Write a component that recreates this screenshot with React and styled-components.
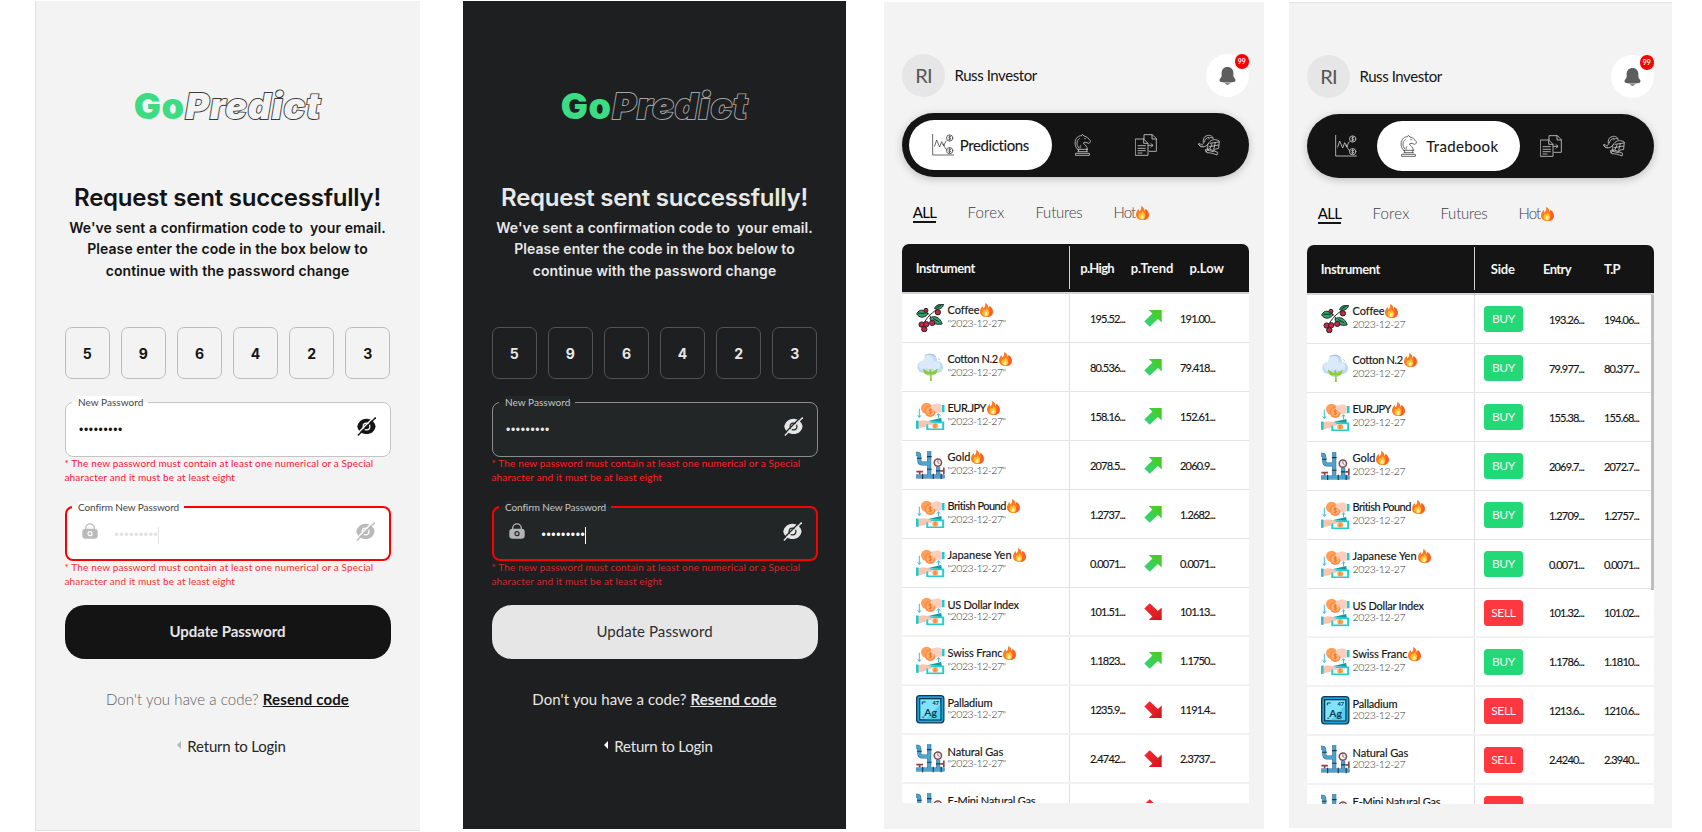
import React from "react";
import styled, { createGlobalStyle, ThemeProvider, css } from "styled-components";

const GlobalStyle = createGlobalStyle`
  *, *::before, *::after { box-sizing: border-box; }
  body { margin: 0; background: #fff; }
`;

const light = {
  bg: "#f3f3f3", edge: "1px solid #e0e0e0", text: "#141414", outline: "#3a3a3a",
  otp: "#bdbdbd", field: "#fff", fieldBorder: "#c4c4c4", label: "#444",
  eye: "#141414", eye2: "#bababa", lock: "#bababa", dots2: "#e2e2e2",
  error: "#ff1430", error2: "#fb2f2f", button: "#141414", buttonText: "#e6e6e6", buttonWeight: 700,
  muted: "#606060", mutedWeight: 300, link: "#141414", arrow: "#b8b8b8", returnText: "#262626",
};

const dark = {
  bg: "#1e1f21", edge: "none", text: "#e8e8e8", outline: "#a5a5a5",
  otp: "#515254", field: "#232627", fieldBorder: "#8b8d8d", label: "#c6c6c6",
  eye: "#e6e6e6", eye2: "#e6e6e6", lock: "#b4b4b4", dots2: "#fff",
  error: "#ff2020", error2: "#d12a2c", button: "#e6e6e6", buttonText: "#2c2d2e", buttonWeight: 400,
  muted: "#e6e6e6", mutedWeight: 400, link: "#e6e6e6", arrow: "#fff", returnText: "#e6e6e6",
};

const Board = styled.main`
  display: flex;
  align-items: flex-start;
  width: 1702px;
  height: 832px;
  overflow: hidden;
  padding-left: 35px;
  font-family: Lato, "Liberation Sans", sans-serif;
`;

/* ---------- password screens ---------- */

const AuthScreen = styled.section`
  display: flex;
  flex-direction: column;
  width: ${(p) => p.$w}px;
  height: ${(p) => p.$h}px;
  margin: 1px ${(p) => p.$gap}px 0 0;
  padding: 83px ${(p) => p.$right}px 0 28.5px;
  background: ${(p) => p.theme.bg};
  border-left: ${(p) => p.theme.edge};
  border-bottom: ${(p) => p.theme.edge};
  color: ${(p) => p.theme.text};
`;

const Logo = styled.div`
  font: 900 36px/44px Inter, sans-serif;
  letter-spacing: 0.5px;
  text-align: center;
  white-space: nowrap;
  color: #3ddc84;
`;

const LogoOutline = styled.span`
  font-style: italic;
  letter-spacing: 0.85px;
  margin-left: 1px;
  color: ${(p) => p.theme.bg};
  -webkit-text-stroke: 1.9px ${(p) => p.theme.outline};
  paint-order: stroke fill;
`;

const Title = styled.h1`
  margin: 55px 0 0;
  font: 600 24px/30px Inter, sans-serif;
  letter-spacing: -0.22px;
  text-align: center;
  white-space: nowrap;
`;

const Lead = styled.p`
  margin: 3.5px -10px 0;
  font: 600 14px/21.5px Inter, sans-serif;
  letter-spacing: 0.08px;
  text-align: center;
  white-space: pre-line;
`;

const CodeRow = styled.div`
  display: flex;
  gap: 10.7px;
  margin-top: 45.5px;
`;

const CodeBox = styled.div`
  flex: 1;
  height: 52px;
  border: 1px solid ${(p) => p.theme.otp};
  border-radius: 7px;
  font: 700 14px/51px Inter, sans-serif;
  text-align: center;
`;

const Field = styled.fieldset`
  min-width: 0;
  height: 60.5px;
  margin: ${(p) => p.$top}px 0 0;
  padding: 0;
  background: ${(p) => p.theme.field};
  border: ${(p) => (p.$invalid ? "2px solid #fb0000" : `1px solid ${p.theme.fieldBorder}`)};
  border-radius: 8px;
`;

const Legend = styled.legend`
  height: 12px;
  margin-left: ${(p) => (p.$invalid ? 5 : 6)}px;
  padding: 0 5px 0 6.5px;
  font-size: 10px;
  line-height: 12px;
  letter-spacing: ${(p) => (p.$invalid ? -0.1 : 0.03)}px;
  color: ${(p) => p.theme.label};
  span { display: block; height: 7px; background: ${(p) => p.theme.field}; }
`;

const FieldBody = styled.div`
  display: flex;
  align-items: center;
  height: ${(p) => (p.$invalid ? 44 : 43)}px;
  padding: 0 14px 0 ${(p) => (p.$invalid ? 15 : 13.5)}px;
  svg { margin-bottom: ${(p) => (p.$invalid ? 7 : 6)}px; }
  svg:last-child { margin-left: auto; }
`;

const Dots = styled.span`
  margin-top: 1.5px;
  font: 12px/17px "Liberation Sans", Arial, sans-serif;
  letter-spacing: 0.68px;
  color: ${(p) => (p.$second ? p.theme.dots2 : p.theme.text)};
  ${(p) => p.$second && css`
    margin-left: 17px;
    border-right: 1px solid ${p.theme.dots2};
  `}
`;

const ErrorText = styled.p`
  margin: ${(p) => (p.$second ? 0 : -0.5)}px -4px 0 0;
  height: 27.3px;
  font-size: 10px;
  line-height: ${(p) => (p.$second ? 13.6 : 14)}px;
  letter-spacing: 0.15px;
  white-space: pre-line;
  color: ${(p) => (p.$second ? p.theme.error2 : p.theme.error)};
`;

const SubmitButton = styled.button`
  height: 54px;
  margin: 16.5px 0 0;
  padding: 0 0 3px;
  border: 0;
  border-radius: 20px;
  background: ${(p) => p.theme.button};
  color: ${(p) => p.theme.buttonText};
  font: ${(p) => p.theme.buttonWeight} 15px/20px Lato, sans-serif;
  letter-spacing: ${(p) => (p.theme.buttonWeight > 400 ? -0.05 : 0.08)}px;
`;

const Resend = styled.p`
  margin: 29.5px 0 0;
  font-size: 15px;
  line-height: 20px;
  font-weight: ${(p) => p.theme.mutedWeight};
  letter-spacing: 0.07px;
  text-align: center;
  color: ${(p) => p.theme.muted};
  a { font-weight: 700; letter-spacing: 0.15px; text-decoration: underline; color: ${(p) => p.theme.link}; }
`;

const ReturnLink = styled.a`
  display: flex;
  justify-content: center;
  align-items: center;
  gap: 6px;
  margin: 27px 0 0;
  padding-left: 8px;
  font-size: 15px;
  line-height: 20px;
  letter-spacing: -0.2px;
  color: ${(p) => p.theme.returnText};
  svg { margin-bottom: 2px; }
`;

const EyeOff = ({ color, cut }) => (
  <svg width="19" height="19" viewBox="0 0 19 19">
    <path d="M0.3 9.5C1.2 4.6 5 1.7 9.5 1.7s8.2 2.9 9.1 7.8c-.9 4.9-4.6 7.6-9.1 7.6S1.2 14.4.3 9.5z" fill={color} />
    <circle cx="9.5" cy="9.5" r="3.4" fill="none" stroke={cut} strokeWidth="1.2" />
    <path d="M17.5-.5L-.5 17.500" stroke={cut} strokeWidth="1.4" />
    <path d="M18.7.5L.9 18.500" stroke={color} strokeWidth="1.4" />
  </svg>
);

const Lock = ({ color, cut }) => (
  <svg width="16" height="17" viewBox="0 0 16 17">
    <path d="M3.700 7V5.200a4.300 4.300 0 018.600 0V7" fill="none" stroke={color} strokeWidth="1.300" />
    <rect x=".3" y="5.800" width="15.400" height="10" rx="3.200" fill={color} />
    <circle cx="8" cy="10.700" r="2" fill="none" stroke={cut} strokeWidth="1.200" />
  </svg>
);

const MASK = "•••••••••";
const RULE = "* The new password must contain at least one numerical or a Special\naharacter and it must be at least eight";

const PasswordReset = ({ theme, ...size }) => (
  <ThemeProvider theme={theme}>
    <AuthScreen {...size}>
      <Logo>Go<LogoOutline>Predict</LogoOutline></Logo>
      <Title>Request sent successfully!</Title>
      <Lead>{"We've sent a confirmation code to \u00a0your email.\nPlease enter the code in the box below to\ncontinue with the password change"}</Lead>
      <CodeRow>{[..."596423"].map((d) => <CodeBox key={d}>{d}</CodeBox>)}</CodeRow>
      <Field $top={17.5}>
        <Legend><span>New Password</span></Legend>
        <FieldBody>
          <Dots>{MASK}</Dots>
          <EyeOff color={theme.eye} cut={theme.field} />
        </FieldBody>
      </Field>
      <ErrorText>{RULE}</ErrorText>
      <Field $top={17.5} $invalid>
        <Legend $invalid><span>Confirm New Password</span></Legend>
        <FieldBody $invalid>
          <Lock color={theme.lock} cut={theme.field} />
          <Dots $second>{MASK}</Dots>
          <EyeOff color={theme.eye2} cut={theme.field} />
        </FieldBody>
      </Field>
      <ErrorText $second>{RULE}</ErrorText>
      <SubmitButton>Update Password</SubmitButton>
      <Resend>Don't you have a code? <a>Resend code</a></Resend>
      <ReturnLink>
        <svg width="4" height="8" viewBox="0 0 4 8"><path d="M4 0v8L0 4z" fill={theme.arrow} /></svg>
        Return to Login
      </ReturnLink>
    </AuthScreen>
  </ThemeProvider>
);

/* ---------- market screens ---------- */

const MarketScreen = styled.section`
  display: flex;
  flex-direction: column;
  width: ${(p) => p.$w}px;
  height: ${(p) => p.$h}px;
  margin: 2px ${(p) => p.$gap}px 0 0;
  padding: 52px 0 0 18px;
  background: #f3f3f3;
  border-top: ${(p) => (p.$line ? "1px solid #e2e2e2" : "0")};
  > * { width: 347px; }
`;

const UserBar = styled.header`
  display: flex;
  align-items: center;
  height: 43px;
  font-size: 15px;
  letter-spacing: -0.43px;
  color: #141414;
`;

const UserName = styled.span`
  margin-bottom: 2px;
`;

const Avatar = styled.div`
  width: 43px;
  height: 43px;
  margin-right: 9.5px;
  border-radius: 50%;
  background: #e6e6e6;
  color: #565656;
  font: 20px/42px Lato, sans-serif;
  letter-spacing: -0.8px;
  text-align: center;
`;

const BellButton = styled.div`
  position: relative;
  display: flex;
  align-items: center;
  justify-content: center;
  width: 43px;
  height: 43px;
  margin-left: auto;
  border-radius: 50%;
  background: #fff;
`;

const Badge = styled.span`
  position: absolute;
  top: 0;
  right: 0;
  width: 14.5px;
  height: 14.5px;
  border-radius: 50%;
  background: #fb0000;
  color: #fff;
  font: 700 7px/14.5px Lato, sans-serif;
  letter-spacing: 0;
  text-align: center;
`;

const Nav = styled.nav`
  display: flex;
  align-items: center;
  height: 64px;
  margin-top: 16px;
  padding: 0 7px;
  border-radius: 32px;
  background: #141414;
  box-shadow: 0 2px 8px rgba(0, 0, 0, 0.22);
`;

const NavItem = styled.div`
  display: flex;
  align-items: center;
  justify-content: center;
  width: ${(p) => (p.$active ? 142.7 : 63)}px;
  height: 50px;
  border-radius: 25px;
  gap: 6px;
  font-size: 15px;
  line-height: 20px;
  letter-spacing: ${(p) => p.$spacing || 0}px;
  color: ${(p) => (p.$active ? "#141414" : "#c8c8c8")};
  background: ${(p) => (p.$active ? "#fff" : "transparent")};
  -webkit-text-stroke: ${(p) => (p.$active ? "0.1px #141414" : "0")};
`;

const Tabs = styled.div`
  display: flex;
  gap: 31px;
  height: 21px;
  margin-top: 25px;
  padding-left: 10.7px;
`;

const Tab = styled.span`
  display: flex;
  gap: 0.5px;
  height: 21px;
  border-bottom: 2px solid ${(p) => (p.$active ? "#141414" : "transparent")};
  font-size: 15px;
  font-weight: ${(p) => (p.$active ? 400 : 300)};
  line-height: 20px;
  letter-spacing: ${(p) => p.$spacing}px;
  color: ${(p) => (p.$active ? "#000" : "#3c3c3c")};
  svg { margin-top: 4px; }
`;

const Table = styled.div`
  height: 559px;
  margin-top: 21px;
  overflow: hidden;
  position: relative;
  border-radius: 7px 7px 0 0;
  background: #fff;
`;

const HeadRow = styled.div`
  display: grid;
  grid-template-columns: 167px ${(p) => p.$cols};
  align-items: center;
  height: 50px;
  border-bottom: 2px solid #d5d1d8;
  background: #141414;
  background-clip: padding-box;
  color: #f4f4f4;
  font-size: 13px;
  font-weight: 700;
`;

const HeadCell = styled.span`
  letter-spacing: ${(p) => p.$spacing}px;
  padding: 2px 0 0 ${(p) => (p.$first ? 13.7 : 0)}px;
  line-height: 41px;
  margin-bottom: 1px;
  ${(p) => p.$divider !== undefined && css`
    border-left: 1px solid #cfcfcf;
    padding-left: ${p.$divider}px;
  `}
`;

const Row = styled.div`
  display: flex;
  height: 49px;
  border-bottom: ${(p) => (p.$late ? "2px solid #f2f2f3" : "1px solid #e6e2ea")};
`;

const InstrumentCell = styled.div`
  display: flex;
  align-items: center;
  gap: 3px;
  width: 167px;
  padding-left: 14px;
`;

const Label = styled.div`
  padding-bottom: 2.5px;
`;

const Name = styled.div`
  display: flex;
  gap: 1px;
  height: ${(p) => (p.$hot ? 14 : 12.5)}px;
  font-size: 11px;
  line-height: 13.5px;
  letter-spacing: ${(p) => p.$spacing}px;
  color: #141414;
  white-space: nowrap;
  -webkit-text-stroke: 0.15px #141414;
`;

const DateText = styled.div`
  height: 13px;
  font-size: 10.5px;
  font-weight: 300;
  line-height: 13px;
  letter-spacing: ${(p) => p.$spacing}px;
  color: #303030;
`;

const Values = styled.div`
  display: flex;
  align-items: center;
  flex: 1;
  border-left: 1px solid #e2dee4;
`;

const Price = styled.span`
  width: ${(p) => p.$w}px;
  text-align: ${(p) => p.$align || "right"};
  font-size: 11px;
  letter-spacing: -0.8px;
  color: #141414;
  -webkit-text-stroke: 0.15px #141414;
`;

const Trend = styled.span`
  display: flex;
  width: 55px;
  padding-left: 18.8px;
`;

const Side = styled.span`
  width: 39.3px;
  height: 26px;
  margin-left: 8.7px;
  border-radius: 3.5px;
  background: ${(p) => (p.$sell ? "#ff383f" : "#22d877")};
  color: #f3f3f3;
  font-size: 12px;
  line-height: 26px;
  letter-spacing: -0.4px;
  text-align: center;
`;

const ScrollThumb = styled.div`
  position: absolute;
  top: 49.5px;
  right: 0;
  width: 3.5px;
  height: 295px;
  background: #bdbdbd;
`;

/* ---------- icons ---------- */

const Fire = () => (
  <svg width="13" height="14" viewBox="0 0 26 28">
    <path d="M10 0c6 2 7 7 7 10 1-1 2-3 2-4 5 3 7 8 7 12 0 6-5 10-12 10C5 28 0 24 0 17 0 12 3 8 5 6c1 2 1 4 2 5 3-3 4-7 3-11z" fill="#ff7a22" />
    <path d="M19 6c5 4 7 9 6 14-1 4-5 7-10 8 4-4 5-9 4-22z" fill="#ff5b2c" />
    <path d="M12 10c5 4 7 8 6 12-1 4-3 5-5 5-5 0-8-3-8-7 0-3 2-5 3-7l2 2c2-1 3-3 2-5z" fill="#ffc02e" />
    <path d="M12 17c3 2 4 5 3 7-1 3-6 3-6-1 0-2 2-3 3-6z" fill="#fff0a0" />
  </svg>
);

const Bell = () => (
  <svg width="17" height="18" viewBox="0 0 17 18">
    <path d="M8.500 0C4.800 0 2.600 2.700 2.600 6.200v3.300L.7 12.200c-.6 1.300.1 2.500 1.500 2.800 4.200.7 8.400.7 12.600 0 1.400-.3 2.100-1.500 1.500-2.800l-1.900-2.700V6.200C14.400 2.700 12.200 0 8.500 0z" fill="#5d5d5d" />
    <path d="M5.800 16.300h5.400c-1.200 1.900-4.200 1.900-5.400 0z" fill="#5d5d5d" />
  </svg>
);

const LineIcon = styled.svg.attrs({ width: 22, height: 22, viewBox: "0 0 66 66" })`
  flex: none;
  fill: none;
  stroke: ${(p) => (p.$active ? "#505050" : "#c4c4c4")};
  stroke-width: 2.6;
  stroke-linejoin: round;
  stroke-linecap: round;
`;

const ChartIcon = ({ active }) => (
  <LineIcon $active={active}>
    <path d="M2 1v62h63M8 36l6-18 9 21 6-16 8 12M35 35l7-14M31 30l14 19" />
    <circle cx="53" cy="12" r="9.5" />
    <circle cx="53" cy="50" r="9.5" />
    <path d="M56 8c-6-3-8 3-3 4s3 7-3 4M53 5v14M56 46c-6-3-8 3-3 4s3 7-3 4M53 43v14" />
  </LineIcon>
);

const KnightIcon = ({ active }) => (
  <LineIcon $active={active}>
    <path d="M17 46C6 36 7 17 17 9c4-3 8-4 12-4l2-4 5 5c9 2 14 8 19 14 1 3-1 7-5 8-4-1-6-3-11-3-2 0-4 1-5 2 4 6 12 9 12 19" />
    <path d="M21 42C12 34 13 20 22 14M25 42c-2-3-1-6 2-8M38 14h2M17 46h30M18 53h28M12 58h40v6H12zM19 46l1 7M45 46l-1 7" />
  </LineIcon>
);

const FilesIcon = ({ active }) => (
  <LineIcon $active={active}>
    <path d="M27 14V2h25l12 12v38H42M51 2v13h13" />
    <path d="M2 15h24l13 13v36H2zM26 15v13h13M9 35h22M9 43h22M9 50h22M9 57h12M40 34h13M48 29l6 5-6 6" />
  </LineIcon>
);

const HelmetIcon = ({ active }) => (
  <LineIcon $active={active}>
    <path d="M30 30c-7 10-18 11-25 5-6-5-2-9 2-5 5 4 10 1 9-5-1-7 0-15 8-19 10-5 20 0 22 7-6-4-12-3-15 2" />
    <path d="M2 30c2 6 7 9 12 7M19 24c2-8 6-13 13-14M30 30c6-13 20-17 34-9l-2 22-12 3-4 7-16-4z" />
    <path d="M36 28l26-4M34 38l28-5M42 30l-6 14M52 26l-5 20M26 50l8-5 25 10-2 8c-9-4-18-7-29-7zM30 44l-8 3 2 7" />
  </LineIcon>
);

const Arrow = ({ up }) => (
  <svg width="18" height="17" viewBox="0 0 18 17">
    <defs>
      <linearGradient id="rise" x1="0" y1="1" x2="1" y2="0"><stop offset="0" stopColor="#2fd58a" /><stop offset="1" stopColor="#4acb12" /></linearGradient>
      <linearGradient id="fall" x1="0" y1="0" x2="1" y2="1"><stop offset="0" stopColor="#ff2a32" /><stop offset="1" stopColor="#cc171c" /></linearGradient>
    </defs>
    {up
      ? <path d="M4.700 0h13v12.600L13.900 9l-8.200 7.700L.3 11.600l8.100-8z" fill="url(#rise)" />
      : <path d="M4.700 17h13V4.400L13.900 8 5.700.3.3 5.400l8.100 8z" fill="url(#fall)" />}
  </svg>
);

const Tile = ({ children }) => <svg width="28.5" height="28.5" viewBox="0 0 86 86">{children}</svg>;

const CoffeeIcon = () => (
  <Tile>
    <g stroke="#20242a" strokeWidth="3">
      <path d="M80 3C60 20 38 30 24 58M62 12l5 14M42 35l9 22M40 32L28 20" fill="none" />
      <path d="M2 30c8-16 22-14 34 0-12 14-26 12-34 0z" fill="#2ea566" />
      <path d="M56 14C60 2 70 1 83 1c-2 13-16 18-27 13z" fill="#2ea566" />
      <path d="M42 42c14-9 31-2 37 18-18 4-34-2-37-18z" fill="#2ea566" />
      <path d="M7 28h22M52 44l18 10M62 11l14-7" fill="none" />
      <g fill="#cf2440">
        <circle cx="66" cy="25" r="8" /><circle cx="30" cy="19" r="6" /><circle cx="49" cy="57" r="8" />
        <circle cx="17" cy="62" r="8" /><circle cx="31" cy="61" r="8" /><circle cx="25" cy="76" r="8" />
      </g>
    </g>
  </Tile>
);

const CottonIcon = () => (
  <Tile>
    <g fill="#c3daf4">
      <circle cx="43" cy="24" r="21" /><circle cx="22" cy="42" r="18" /><circle cx="64" cy="42" r="18" /><circle cx="43" cy="46" r="24" />
    </g>
    <g fill="#dbeafa"><circle cx="38" cy="22" r="15" /><circle cx="22" cy="38" r="13" /><circle cx="60" cy="38" r="13" /><circle cx="41" cy="36" r="13" /></g>
    <path d="M26 8c12-7 24-6 34 3M66 16l7 6" fill="none" stroke="#8ba3c0" strokeWidth="2" />
    <path d="M43 64c-12 4-21-2-22-18 8 7 14 9 18 12l4-12 5 12c4-3 10-5 17-12 0 15-7 22-18 18l1 22h-6z" fill="#8ccc3a" />
  </Tile>
);

const CurrencyIcon = () => (
  <Tile>
    <circle cx="32" cy="19" r="17" fill="#ff9f5a" /><circle cx="43" cy="28" r="17" fill="#ff8a45" />
    <circle cx="43" cy="28" r="12" fill="#ffb36b" />
    <path d="M48 22c-9-4-12 5-5 6s4 9-5 6M43 19v18" fill="none" stroke="#f07030" strokeWidth="3" />
    <path d="M47 8l18-4 12 4v24l-15 1c-5-4-8-10-15-12-5-2-4-9 0-13z" fill="#ffcdbb" />
    <path d="M78 9h8v22h-8z" fill="#25c7cc" />
    <path d="M10 20v26M5 40l5 7 5-7M68 49V36M63 41l5-6 5 6" fill="none" stroke="#42b9e4" strokeWidth="3" />
    <path d="M34 58l42-10 2 12z" fill="#119da3" />
    <path d="M31 59h54v26H31z" fill="#25cdd0" /><path d="M37 64h42v16H37z" fill="#f4fbfb" />
    <circle cx="58" cy="72" r="9" fill="#ffa95c" /><path d="M61 68c-5-2-7 3-3 4s2 6-4 3" fill="none" stroke="#ee7330" strokeWidth="2.5" />
    <path d="M7 58l13-3c9 0 14 3 24 6 8 4 4 9-3 8l-11-2v8L7 79z" fill="#ffc3b0" />
    <path d="M0 56h8v25H0z" fill="#25c7cc" />
  </Tile>
);

const PipesIcon = () => (
  <Tile>
    <g fill="none" stroke="#35657f" strokeWidth="12">
      <path d="M40 0v74M0 8h4q6 0 6 8v12q0 10 10 10h17M0 77h86M67 74V48" />
    </g>
    <g fill="none" stroke="#4ba3d2" strokeWidth="9">
      <path d="M40 0v74M0 8h4q6 0 6 8v12q0 10 10 10h17M0 77h86M67 74V48" />
    </g>
    <path d="M33 17h14M33 55h14M3 22h14M20 69v16M52 69v16M76 69v16M60 60h14" stroke="#1d3a4c" strokeWidth="3.5" />
    <circle cx="66" cy="35" r="11" fill="#f2f2f2" stroke="#7c4a4e" strokeWidth="4.5" />
    <path d="M66 28v7l5 3" stroke="#7c4a4e" strokeWidth="2.5" fill="none" />
    <path d="M1 62h20M11 62v9M84 50v20M74 60h9" stroke="#8f4448" strokeWidth="5" />
  </Tile>
);

const SilverIcon = () => (
  <Tile>
    <rect x="2" y="2" width="82" height="82" rx="9" fill="#12a9e2" stroke="#12394c" strokeWidth="4" />
    <rect x="11" y="11" width="64" height="64" fill="#7fe4fb" stroke="#12394c" strokeWidth="4" />
    <path d="M28 73l45-45v45z" fill="#58cdf0" />
    <path d="M19 28v-7h10M19 67h6" fill="none" stroke="#12394c" strokeWidth="3" />
    <text x="50" y="30" fontFamily="Lato" fontWeight="900" fontSize="17" fill="#12394c">47</text>
    <text x="44" y="62" textAnchor="middle" fontFamily="Lato" fontWeight="700" fontSize="31" fill="#12394c">Ag</text>
  </Tile>
);

/* ---------- data ---------- */

const DAY = "2023-12-27";

const INSTRUMENTS = [
  { name: "Coffee", icon: CoffeeIcon, date: DAY, hot: true, up: true, high: "195.52...", low: "191.00...", entry: "193.26...", tp: "194.06...", ls: -0.1 },
  { name: "Cotton N.2", icon: CottonIcon, date: DAY, hot: true, up: true, high: "80.536...", low: "79.418...", entry: "79.977...", tp: "80.377...", ls: -0.35 },
  { name: "EUR.JPY", icon: CurrencyIcon, date: DAY, hot: true, up: true, high: "158.16...", low: "152.61...", entry: "155.38...", tp: "155.68...", ls: -0.5 },
  { name: "Gold", icon: PipesIcon, date: DAY, hot: true, up: true, high: "2078.5...", low: "2060.9...", entry: "2069.7...", tp: "2072.7...", ls: 0 },
  { name: "British Pound", icon: CurrencyIcon, date: DAY, hot: true, up: true, high: "1.2737...", low: "1.2682...", entry: "1.2709...", tp: "1.2757...", ls: -0.5 },
  { name: "Japanese Yen", icon: CurrencyIcon, date: DAY, hot: true, up: true, high: "0.0071...", low: "0.0071...", entry: "0.0071...", tp: "0.0071...", ls: 0 },
  { name: "US Dollar Index", icon: CurrencyIcon, date: DAY, up: false, high: "101.51...", low: "101.13...", entry: "101.32...", tp: "101.02...", ls: -0.27 },
  { name: "Swiss Franc", icon: CurrencyIcon, date: DAY, hot: true, up: true, high: "1.1823...", low: "1.1750...", entry: "1.1786...", tp: "1.1810...", ls: -0.1 },
  { name: "Palladium", icon: SilverIcon, date: DAY, up: false, high: "1235.9...", low: "1191.4...", entry: "1213.6...", tp: "1210.6...", ls: -0.2 },
  { name: "Natural Gas", icon: PipesIcon, date: DAY, up: false, high: "2.4742...", low: "2.3737...", entry: "2.4240...", tp: "2.3940...", ls: -0.1 },
  { name: "E-Mini Natural Gas", icon: PipesIcon, up: false, ls: -0.21 },
];

const NAV = [
  { label: "Predictions", icon: ChartIcon, spacing: -0.38 },
  { label: "Tradebook", icon: KnightIcon, spacing: 0.29 },
  { label: "Files", icon: FilesIcon },
  { label: "Strategy", icon: HelmetIcon },
];

const Market = ({ active, quoted, cols, headings, renderValues, children, ...size }) => (
  <MarketScreen {...size}>
    <UserBar>
      <Avatar>RI</Avatar>
      <UserName>Russ Investor</UserName>
      <BellButton><Bell /><Badge>99</Badge></BellButton>
    </UserBar>
    <Nav>
      {NAV.map(({ label, icon: Icon, spacing }) => (
        <NavItem key={label} $active={label === active} $spacing={spacing}>
          <Icon active={label === active} />
          {label === active && label}
        </NavItem>
      ))}
    </Nav>
    <Tabs>
      <Tab $active $spacing={-0.6}>ALL</Tab>
      <Tab $spacing={0.23}>Forex</Tab>
      <Tab $spacing={-0.22}>Futures</Tab>
      <Tab $spacing={-0.9}>Hot<Fire /></Tab>
    </Tabs>
    <Table>
      <HeadRow $cols={cols}>
        <HeadCell $first $spacing={-0.45}>Instrument</HeadCell>
        {headings.map(([text, spacing, divider]) => (
          <HeadCell key={text} $spacing={spacing} $divider={divider}>{text}</HeadCell>
        ))}
      </HeadRow>
      {INSTRUMENTS.map((item, i) => {
        const Icon = item.icon;
        return (
          <Row key={item.name} $late={i > 5}>
            <InstrumentCell>
              <Icon />
              <Label>
                <Name $hot={item.hot} $spacing={item.ls}>{item.name}{item.hot && <Fire />}</Name>
                <DateText $spacing={quoted ? -0.46 : -0.38}>{item.date && (quoted ? `"${item.date}"` : item.date)}</DateText>
              </Label>
            </InstrumentCell>
            <Values>{renderValues(item)}</Values>
          </Row>
        );
      })}
      {children}
    </Table>
  </MarketScreen>
);

export default function App() {
  return (
    <>
      <GlobalStyle />
      <Board>
        <PasswordReset theme={light} $w={385} $h={830} $gap={43} $right={29.5} />
        <PasswordReset theme={dark} $w={383} $h={828} $gap={38} $right={28.5} />
        <Market
          active="Predictions" quoted $w={380} $h={827} $gap={25}
          cols="61.7px 58.7px 1fr"
          headings={[["p.High", -0.7, 10.3], ["p.Trend", 0.05], ["p.Low", 0]]}
          renderValues={(r) => (
            <>
              <Price $w={55}>{r.high}</Price>
              <Trend><Arrow up={r.up} /></Trend>
              <Price $w={50} $align="left">{r.low}</Price>
            </>
          )}
        />
        <Market
          active="Tradebook" $w={383} $h={826} $gap={0} $line
          cols="69px 61px 1fr"
          headings={[["Side", -0.15, 15.7], ["Entry", -0.6], ["T.P", -0.8]]}
          renderValues={(r) => (
            <>
              <Side $sell={!r.up}>{r.up ? "BUY" : "SELL"}</Side>
              <Price $w={61}>{r.entry}</Price>
              <Price $w={55}>{r.tp}</Price>
            </>
          )}
        >
          <ScrollThumb />
        </Market>
      </Board>
    </>
  );
}
